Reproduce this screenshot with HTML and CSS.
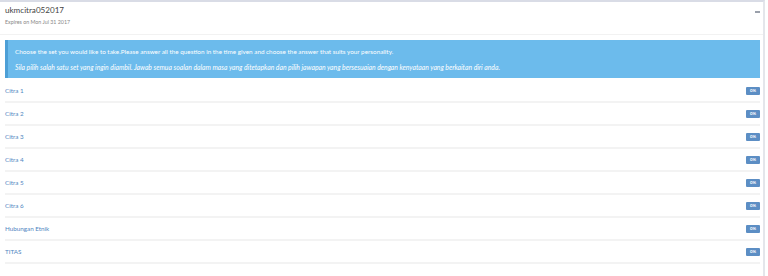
FILE: index.html
```html
<!DOCTYPE html>
<html>
<head>
<meta charset="utf-8">
<link rel="stylesheet" href="styles.css">
</head>
<body>
<div class="box">
  <div class="box-header">
    <div class="titles">
      <div class="title">ukmcitra052017</div>
      <div class="sub">Expires on Mon Jul 31 2017</div>
    </div>
    <div class="minus"></div>
  </div>
  <div class="box-body">
    <div class="alert">
      <p class="l1">Choose the set you would like to take.Please answer all the question in the time given and choose the answer that suits your personality.</p>
      <p class="l2">Sila pilih salah satu set yang ingin diambil. Jawab semua soalan dalam masa yang ditetapkan dan pilih jawapan yang bersesuaian dengan kenyataan yang berkaitan diri anda.</p>
    </div>
    <ul class="list">
      <li><a>Citra 1</a><span class="badge">0%</span></li>
      <li><a>Citra 2</a><span class="badge">0%</span></li>
      <li><a>Citra 3</a><span class="badge">0%</span></li>
      <li><a>Citra 4</a><span class="badge">0%</span></li>
      <li><a>Citra 5</a><span class="badge">0%</span></li>
      <li><a>Citra 6</a><span class="badge">0%</span></li>
      <li><a>Hubungan Etnik</a><span class="badge">0%</span></li>
      <li><a>TITAS</a><span class="badge">0%</span></li>
    </ul>
  </div>
</div>
</body>
</html>
```
FILE: styles.css
```css
html, body { margin: 0; padding: 0; background: #fff; }
body { font-family: Lato, "Open Sans", sans-serif; color: #444; }
.box {
  width: 765px;
  border-top: 2px solid #d9dce6;
  border-right: 2px solid #e4e6eb;
  box-sizing: border-box;
  height: 276px;
}
.box-header {
  display: flex;
  justify-content: space-between;
  box-sizing: border-box;
  padding: 3px 3px 0 5px;
  height: 33px;
  border-bottom: 1px solid #f2f2f2;
}
.title { font-size: 8.1px; color: #444; line-height: 11px; }
.sub { font-size: 5.3px; color: #888; margin-top: 3px; line-height: 7px; }
.minus { width: 5px; height: 1.5px; background: #9aa0ab; margin-top: 6px; }
.box-body { padding: 5px 3px 0 5px; }
.alert {
  background: #6cbbec;
  border-left: 3px solid #4d9fd6;
  color: #fff;
  height: 38px;
  box-sizing: border-box;
  padding: 8px 8px 0 7px;
  font-size: 6.35px;
}
.alert p { margin: 0; line-height: 8px; }
.alert .l2 { font-style: italic; margin-top: 7px; font-size: 6.8px; }
.list { list-style: none; margin: 2px 0 0; padding: 0; }
.list li {
  display: flex;
  justify-content: space-between;
  align-items: center;
  height: 21px;
  border-bottom: 2px solid #f3f3f3;
  font-size: 6.3px;
}
.list a { color: #4f86bf; }
.badge {
  background: #5c8ec4;
  color: #fff;
  font-size: 4.3px;
  font-weight: bold;
  width: 14px;
  height: 8px;
  line-height: 8px;
  text-align: center;
  border-radius: 1px;
}
```
